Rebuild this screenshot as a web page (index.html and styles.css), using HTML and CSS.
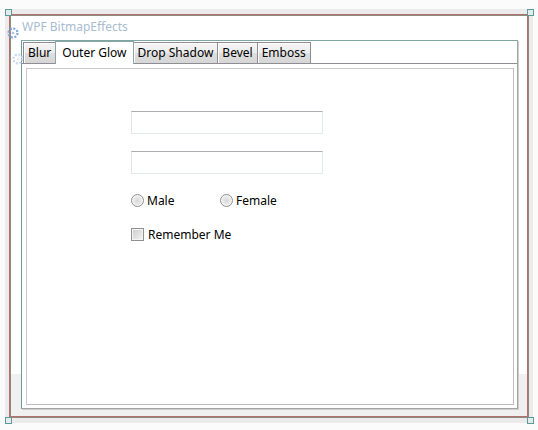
FILE: index.html
```html
<!DOCTYPE html>
<html>
<head>
<meta charset="utf-8">
<link rel="stylesheet" href="styles.css">
</head>
<body>
<div class="stage">
  <div class="chrome">
    <div class="window">
      <div class="title">WPF BitmapEffects</div>
      <div class="tabctl">
        <div class="tabs">
          <div class="tab">Blur</div>
          <div class="tab selected">Outer Glow</div>
          <div class="tab">Drop Shadow</div>
          <div class="tab">Bevel</div>
          <div class="tab">Emboss</div>
        </div>
        <div class="panel">
          <div class="inner">
            <div class="form">
              <div class="textbox"></div>
              <div class="textbox"></div>
              <div class="radios">
                <label class="radio first"><span class="dot"></span>Male</label>
                <label class="radio"><span class="dot"></span>Female</label>
              </div>
              <label class="check"><span class="box"></span>Remember Me</label>
            </div>
          </div>
        </div>
      </div>
    </div>
  </div>
  <span class="handle h-tl"></span>
  <span class="handle h-tr"></span>
  <span class="handle h-bl"></span>
  <span class="handle h-br"></span>
  <svg class="adorner a1" width="12" height="12" viewBox="0 0 12 12">
    <circle cx="6" cy="6" r="4.5" fill="none" stroke="#7fa7dc" stroke-width="2.2" stroke-dasharray="2 1.5"/>
    <circle cx="6" cy="6" r="1.3" fill="#a9c4ea"/>
  </svg>
  <svg class="adorner a2" width="12" height="12" viewBox="0 0 12 12">
    <circle cx="6" cy="6" r="4.5" fill="none" stroke="#c5d8f0" stroke-width="2.2" stroke-dasharray="2 1.5"/>
    <circle cx="6" cy="6" r="1.3" fill="#dce8f6"/>
  </svg>
</div>
</body>
</html>
```

FILE: styles.css
```css
html, body {
  margin: 0;
  padding: 0;
  background: #fbfbfb;
}
body {
  font-family: "Noto Sans", "Open Sans", sans-serif;
  font-size: 12px;
  color: #000;
}
.stage {
  position: relative;
  width: 538px;
  height: 430px;
  box-sizing: border-box;
  padding: 9px 5px 7px 5px;
}
.chrome {
  background: #ebebeb;
  padding: 5px 5px 6px 4px;
  height: 414px;
  box-sizing: border-box;
}
.window {
  height: 403px;
  box-sizing: border-box;
  border: 1px solid #b2706f;
  box-shadow: inset 1px 1px 0 #8f8a7f, 1px 1px 0 #8f8a7f;
  background: linear-gradient(#ffffff 0, #ffffff 359px, #f0f0f0 359px);
  display: flex;
  flex-direction: column;
  padding: 1px 9px 7px 11px;
}
.title {
  height: 24px;
  line-height: 22px;
  padding-left: 1px;
  color: #a9bccf;
  flex: none;
}
.tabctl {
  flex: 1;
  display: flex;
  flex-direction: column;
  border: 1px solid #a4a4a4;
  border-top-color: #7fa6a5;
  border-left-color: #6f9a98;
  box-shadow: 1px 1px 0 #cdcdcd;
  background: #fff;
}
.tabs {
  display: flex;
  align-items: flex-end;
  padding-left: 1px;
  height: 22px;
  position: relative;
  z-index: 1;
}
.tab {
  height: 21px;
  box-sizing: border-box;
  border: 1px solid #8c8e94;
  border-bottom: none;
  margin-right: -1px;
  padding: 0 4px;
  line-height: 19px;
  background: linear-gradient(#f5f5f5, #ebebeb 50%, #dedede 50%, #d6d6d6);
  box-shadow: inset 1px 1px 0 #fcfcfc;
  white-space: nowrap;
}
.tab.selected {
  height: 23px;
  margin-bottom: -1px;
  padding: 0 6px;
  line-height: 21px;
  background: #fff;
  box-shadow: none;
  border-color: #8aa5a5;
  position: relative;
  z-index: 2;
}
.panel {
  flex: 1;
  border-top: 1px solid #8c8e94;
  padding: 4px 3px 3px 4px;
  display: flex;
}
.inner {
  flex: 1;
  border: 1px solid #c9c9c9;
  border-right-color: #bdbdbd;
  border-bottom-color: #bdbdbd;
}
.form {
  margin-left: 104px;
  padding-top: 42px;
  display: flex;
  flex-direction: column;
  align-items: flex-start;
}
.textbox {
  width: 192px;
  height: 23px;
  box-sizing: border-box;
  border: 1px solid #e3e9ef;
  border-top-color: #abadb3;
  border-left-color: #e2e3ea;
  margin-bottom: 17px;
}
.radios {
  display: flex;
  align-items: center;
  height: 16px;
  margin-top: 1px;
}
.radio {
  display: flex;
  align-items: center;
}
.radio.first {
  width: 89px;
}
.dot {
  width: 13px;
  height: 13px;
  box-sizing: border-box;
  border-radius: 50%;
  border: 1px solid #8f8f8f;
  background: radial-gradient(circle at 50% 50%, #d8d8d8 0, #e6e6e6 40%, #f6f6f6 80%);
  box-shadow: inset 0 0 0 1px #f4f4f4;
  margin-right: 3px;
}
.check {
  display: flex;
  align-items: center;
  height: 16px;
  margin-top: 18px;
}
.box {
  width: 13px;
  height: 13px;
  box-sizing: border-box;
  border: 1px solid #8f8f8f;
  background: linear-gradient(135deg, #cbcbcb, #f4f4f4);
  box-shadow: inset 0 0 0 1px #f4f4f4;
  margin-right: 4px;
}
.handle {
  position: absolute;
  width: 7px;
  height: 7px;
  box-sizing: border-box;
  border: 1px solid #5e9a99;
  background: #e4ebeb;
}
.h-tl { left: 5px; top: 9px; }
.h-tr { left: 527px; top: 9px; }
.h-bl { left: 5px; top: 417px; }
.h-br { left: 527px; top: 417px; }
.adorner {
  position: absolute;
}
.a1 { left: 7px; top: 27px; }
.a2 { left: 12px; top: 53px; }
```
